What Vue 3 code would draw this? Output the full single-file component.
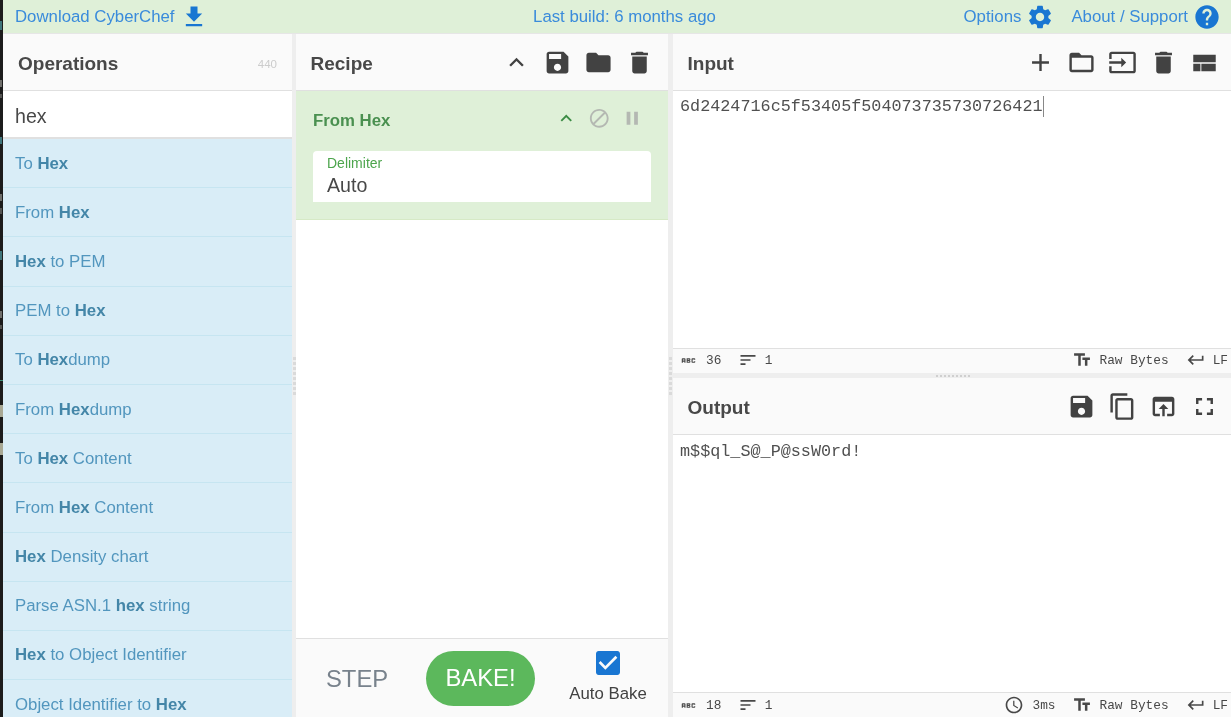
<script setup>
const P = {
  download: 'M19 9h-4V3H9v6H5l7 7 7-7zM5 18v2h14v-2H5z',
  settings: 'M19.14 12.94c.04-.3.06-.61.06-.94 0-.32-.02-.64-.07-.94l2.03-1.58c.18-.14.23-.41.12-.61l-1.92-3.32c-.12-.22-.37-.29-.59-.22l-2.39.96c-.5-.38-1.03-.7-1.62-.94l-.36-2.54c-.04-.24-.24-.41-.48-.41h-3.84c-.24 0-.43.17-.47.41l-.36 2.54c-.59.24-1.13.57-1.62.94l-2.39-.96c-.22-.08-.47 0-.59.22L2.74 8.87c-.12.21-.08.47.12.61l2.03 1.58c-.05.3-.09.63-.09.94s.02.64.07.94l-2.03 1.58c-.18.14-.23.41-.12.61l1.92 3.32c.12.22.37.29.59.22l2.39-.96c.5.38 1.03.7 1.62.94l.36 2.54c.05.24.24.41.48.41h3.84c.24 0 .44-.17.47-.41l.36-2.54c.59-.24 1.13-.56 1.62-.94l2.39.96c.22.08.47 0 .59-.22l1.92-3.32c.12-.22.07-.47-.12-.61l-2.01-1.58zM12 15.6c-1.98 0-3.6-1.62-3.6-3.6s1.62-3.6 3.6-3.6 3.6 1.62 3.6 3.6-1.62 3.6-3.6 3.6z',
  help: 'M12 2C6.48 2 2 6.48 2 12s4.48 10 10 10 10-4.48 10-10S17.52 2 12 2zm1 17h-2v-2h2v2zm2.07-7.75l-.9.92C13.45 12.9 13 13.5 13 15h-2v-.5c0-1.1.45-2.1 1.17-2.83l1.24-1.26c.37-.36.59-.86.59-1.41 0-1.1-.9-2-2-2s-2 .9-2 2H8c0-2.21 1.79-4 4-4s4 1.79 4 4c0 .88-.36 1.68-.93 2.25z',
  up: 'M7.41 15.41L12 10.83l4.59 4.58L18 14l-6-6-6 6z',
  save: 'M17 3H5c-1.11 0-2 .9-2 2v14c0 1.1.89 2 2 2h14c1.1 0 2-.9 2-2V7l-4-4zm-5 16c-1.66 0-3-1.34-3-3s1.34-3 3-3 3 1.34 3 3-1.34 3-3 3zm3-10H5V5h10v4z',
  folder: 'M10 4H4c-1.1 0-1.99.9-1.99 2L2 18c0 1.1.9 2 2 2h16c1.1 0 2-.9 2-2V8c0-1.1-.9-2-2-2h-8l-2-2z',
  trash: 'M6 19c0 1.1.9 2 2 2h8c1.1 0 2-.9 2-2V7H6v12zM19 4h-3.5l-1-1h-5l-1 1H5v2h14V4z',
  add: 'M19 13h-6v6h-2v-6H5v-2h6V5h2v6h6v2z',
  open: 'M20 6h-8l-2-2H4c-1.1 0-1.99.9-1.99 2L2 18c0 1.1.9 2 2 2h16c1.1 0 2-.9 2-2V8c0-1.1-.9-2-2-2zm0 12H4V8h16v10z',
  input: 'M21 3.01H3c-1.1 0-2 .9-2 2V9h2V4.99h18v14.03H3V15H1v4.01c0 1.1.9 1.98 2 1.98h18c1.1 0 2-.88 2-1.98v-14c0-1.11-.9-2-2-2zM11 16l4-4-4-4v3H1v2h10v3z',
  layout: 'M2.7 5.6h18.6v6.1H2.7zM2.7 13h5.9v6.2H2.7zM9.4 13h11.9v6.2H9.4z',
  copy: 'M16 1H4c-1.1 0-2 .9-2 2v14h2V3h12V1zm3 4H8c-1.1 0-2 .9-2 2v14c0 1.1.9 2 2 2h11c1.1 0 2-.9 2-2V7c0-1.1-.9-2-2-2zm0 16H8V7h11v14z',
  browser: 'M19 4H5c-1.11 0-2 .9-2 2v12c0 1.1.89 2 2 2h4v-2H5V8h14v10h-4v2h4c1.1 0 2-.9 2-2V6c0-1.1-.89-2-2-2zm-7 6l-4 4h3v6h2v-6h3l-4-4z',
  fullscreen: 'M7 14H5v5h5v-2H7v-3zm-2-4h2V7h3V5H5v5zm12 7h-3v2h5v-5h-2v3zM14 5v2h3v3h2V5h-5z',
  block: 'M12 2C6.48 2 2 6.48 2 12s4.48 10 10 10 10-4.48 10-10S17.52 2 12 2zM4 12c0-4.42 3.58-8 8-8 1.85 0 3.55.63 4.9 1.69L5.69 16.9C4.63 15.55 4 13.85 4 12zm8 8c-1.85 0-3.55-.63-4.9-1.69L18.31 7.1C19.37 8.45 20 10.15 20 12c0 4.42-3.58 8-8 8z',
  pause: 'M6 19h4V5H6v14zm8-14v14h4V5h-4z',
  check: 'M19 3H5c-1.11 0-2 .9-2 2v14c0 1.1.89 2 2 2h14c1.11 0 2-.9 2-2V5c0-1.1-.89-2-2-2zm-9 14l-5-5 1.41-1.41L10 14.17l7.59-7.59L19 8l-9 9z',
  text: 'M2.5 4v3h5v12h3V7h5V4h-13zm19 5h-9v3h3v7h3v-7h3V9z',
  ret: 'M19 7v4H5.83l3.58-3.59L8 6l-6 6 6 6 1.41-1.41L5.83 13H21V7z',
  sort: 'M3 18h6v-2H3v2zM3 6v2h18V6H3zm0 7h12v-2H3v2z',
  abc: 'M21 11h-1.5v-.5h-2v3h2V13H21v1c0 .55-.45 1-1 1h-3c-.55 0-1-.45-1-1v-4c0-.55.45-1 1-1h3c.55 0 1 .45 1 1v1zM8 10v5H6.5v-1.5h-2V15H3v-5c0-.55.45-1 1-1h3c.55 0 1 .45 1 1zm-1.5.5h-2V12h2v-1.5zm7 1.5c.55 0 1 .45 1 1v1c0 .55-.45 1-1 1h-4V9h4c.55 0 1 .45 1 1v1c0 .55-.45 1-1 1zM11 10.5v.75h2v-.75h-2zm2 2.25h-2v.75h2v-.75z',
  clock: 'M11.99 2C6.47 2 2 6.48 2 12s4.47 10 9.99 10C17.52 22 22 17.52 22 12S17.52 2 11.99 2zM12 20c-4.42 0-8-3.58-8-8s3.58-8 8-8 8 3.58 8 8-3.58 8-8 8zm.5-13H11v6l5.25 3.15.75-1.23-4.5-2.67z'
}
const ops = [
  [['To ', 0], ['Hex', 1]],
  [['From ', 0], ['Hex', 1]],
  [['Hex', 1], [' to PEM', 0]],
  [['PEM to ', 0], ['Hex', 1]],
  [['To ', 0], ['Hex', 1], ['dump', 0]],
  [['From ', 0], ['Hex', 1], ['dump', 0]],
  [['To ', 0], ['Hex', 1], [' Content', 0]],
  [['From ', 0], ['Hex', 1], [' Content', 0]],
  [['Hex', 1], [' Density chart', 0]],
  [['Parse ASN.1 ', 0], ['hex', 1], [' string', 0]],
  [['Hex', 1], [' to Object Identifier', 0]],
  [['Object Identifier to ', 0], ['Hex', 1]]
]
</script>

<template>
  <div class="page">
    <header class="banner">
      <div class="b-left">
        <a>Download CyberChef</a>
        <svg class="ic b-ic" viewBox="0 0 24 24"><path :d="P.download" /></svg>
      </div>
      <div class="b-mid">Last build: 6 months ago</div>
      <div class="b-right">
        <a>Options</a>
        <svg class="ic b-ic" viewBox="0 0 24 24"><path :d="P.settings" /></svg>
        <a class="about">About / Support</a>
        <svg class="ic b-ic" viewBox="0 0 24 24"><path :d="P.help" /></svg>
      </div>
    </header>
    <main class="workspace">
      <section class="col ops">
        <div class="title">
          <span class="name">Operations</span>
          <span class="count">440</span>
        </div>
        <div class="search">hex</div>
        <ul class="list">
          <li v-for="(op, i) in ops" :key="i">
            <template v-for="(t, j) in op" :key="j"><b v-if="t[1]">{{ t[0] }}</b><span v-else>{{ t[0] }}</span></template>
          </li>
        </ul>
      </section>
      <div class="gutter-v"><i class="dots-v"></i></div>
      <section class="col recipe">
        <div class="title">
          <span class="name">Recipe</span>
          <div class="tools">
            <svg class="ic t29" viewBox="0 0 24 24"><path :d="P.up" /></svg>
            <svg class="ic t29" viewBox="0 0 24 24"><path :d="P.save" /></svg>
            <svg class="ic t29" viewBox="0 0 24 24"><path :d="P.folder" /></svg>
            <svg class="ic t29" viewBox="0 0 24 24"><path :d="P.trash" /></svg>
          </div>
        </div>
        <div class="op">
          <div class="op-head">
            <span class="op-name">From Hex</span>
            <div class="op-tools">
              <svg class="ic green" viewBox="0 0 24 24"><path :d="P.up" /></svg>
              <svg class="ic grey" viewBox="0 0 24 24"><path :d="P.block" /></svg>
              <svg class="ic grey" viewBox="0 0 24 24"><path :d="P.pause" /></svg>
            </div>
          </div>
          <div class="field">
            <label>Delimiter</label>
            <div class="val">Auto</div>
          </div>
        </div>
        <div class="spacer"></div>
        <div class="controls">
          <span class="step">STEP</span>
          <span class="bake">BAKE!</span>
          <div class="auto">
            <svg class="check" viewBox="3 3 18 18"><path :d="P.check" /></svg>
            <span>Auto Bake</span>
          </div>
        </div>
      </section>
      <div class="gutter-v"><i class="dots-v"></i></div>
      <section class="col io">
        <div class="pane in">
          <div class="title">
            <span class="name">Input</span>
            <div class="tools">
              <svg class="ic t29" viewBox="0 0 24 24"><path :d="P.add" /></svg>
              <svg class="ic t29" viewBox="0 0 24 24"><path :d="P.open" /></svg>
              <svg class="ic t29" viewBox="0 0 24 24"><path :d="P.input" /></svg>
              <svg class="ic t29" viewBox="0 0 24 24"><path :d="P.trash" /></svg>
              <svg class="ic t29" viewBox="0 0 24 24"><path :d="P.layout" /></svg>
            </div>
          </div>
          <div class="body"><span class="caret">6d2424716c5f53405f504073735730726421</span></div>
          <div class="status">
            <svg class="ic s-abc" viewBox="2 6 20 12"><path :d="P.abc" /></svg>
            <span class="s-n">36</span>
            <svg class="ic s" viewBox="0 0 24 24"><path :d="P.sort" /></svg>
            <span>1</span>
            <div class="spacer"></div>
            <svg class="ic s s-t" viewBox="0 0 24 24"><path :d="P.text" /></svg>
            <span>Raw Bytes</span>
            <svg class="ic s s-r" viewBox="0 0 24 24"><path :d="P.ret" /></svg>
            <span>LF</span>
          </div>
        </div>
        <div class="gutter-h"><i class="dots-h"></i></div>
        <div class="pane out">
          <div class="title">
            <span class="name">Output</span>
            <div class="tools">
              <svg class="ic t29" viewBox="0 0 24 24"><path :d="P.save" /></svg>
              <svg class="ic t29" viewBox="0 0 24 24"><path :d="P.copy" /></svg>
              <svg class="ic t29" viewBox="0 0 24 24"><path :d="P.browser" /></svg>
              <svg class="ic t29" viewBox="0 0 24 24"><path :d="P.fullscreen" /></svg>
            </div>
          </div>
          <div class="body">m$$ql_S@_P@ssW0rd!</div>
          <div class="status">
            <svg class="ic s-abc" viewBox="2 6 20 12"><path :d="P.abc" /></svg>
            <span class="s-n">18</span>
            <svg class="ic s" viewBox="0 0 24 24"><path :d="P.sort" /></svg>
            <span>1</span>
            <div class="spacer"></div>
            <svg class="ic s s-c" viewBox="0 0 24 24"><path :d="P.clock" /></svg>
            <span>3ms</span>
            <svg class="ic s s-t s-t2" viewBox="0 0 24 24"><path :d="P.text" /></svg>
            <span>Raw Bytes</span>
            <svg class="ic s s-r" viewBox="0 0 24 24"><path :d="P.ret" /></svg>
            <span>LF</span>
          </div>
        </div>
      </section>
    </main>
  </div>
</template>

<style>
html, body { margin: 0; overflow: hidden; background: #1b1b1b; }
</style>

<style scoped>
.page {
  width: 1231px;
  height: 717px;
  padding-left: 3px;
  box-sizing: border-box;
  display: flex;
  flex-direction: column;
  overflow: hidden;
  filter: blur(0.4px);
  font-family: "Liberation Sans", Arial, sans-serif;
  color: #424242;
  background-color: #1c1c1c;
  background-repeat: no-repeat;
  background-image:
    linear-gradient(#3f757b, #3f757b), linear-gradient(#6f6f6c, #6f6f6c), linear-gradient(#555553, #555553),
    linear-gradient(#3f757b, #3f757b), linear-gradient(#6f6f6c, #6f6f6c), linear-gradient(#555553, #555553),
    linear-gradient(#3f757b, #3f757b), linear-gradient(#6f6f6c, #6f6f6c), linear-gradient(#555553, #555553),
    linear-gradient(#3f8f7a, #3f8f7a), linear-gradient(#a8a894, #a8a894), linear-gradient(#a8a894, #a8a894);
  background-size:
    2px 9px, 2px 7px, 2px 4px,
    2px 7px, 2px 7px, 2px 6px,
    2px 9px, 2px 7px, 2px 4px,
    3px 1px, 3px 12px, 3px 12px;
  background-position:
    0 21px, 0 80px, 0 94px,
    0 137px, 0 194px, 0 208px,
    0 251px, 0 311px, 0 325px,
    0 380px, 0 405px, 0 443px;
}
.ic { display: block; fill: currentColor; flex: none; }
.banner {
  height: 34px;
  flex: none;
  box-sizing: border-box;
  background: #dff0d8;
  border-bottom: 1px solid #e6e6e6;
  display: grid;
  grid-template-columns: 1fr auto 1fr;
  align-items: center;
  padding: 0 10px 0 12px;
  font-size: 16.8px;
  color: #3a8bdb;
}
.b-left, .b-right { display: flex; align-items: center; }
.b-right { justify-content: flex-end; }
.b-mid { margin-left: 13px; }
.b-ic { width: 28px; height: 28px; color: #1976d2; margin-left: 5px; }
.about { margin-left: 17px; }
.workspace {
  flex: 1;
  min-height: 0;
  display: grid;
  grid-template-columns: 289px 4px 372px 5px 558px;
  background: #eee;
}
.col { display: flex; flex-direction: column; min-height: 0; min-width: 0; background: #fff; overflow: hidden; }
.title {
  height: 57px;
  flex: none;
  box-sizing: border-box;
  background: #fafafa;
  border-bottom: 1px solid #e0e0e0;
  display: flex;
  align-items: center;
  justify-content: space-between;
  padding: 0 12.5px 0 14.5px;
  font-size: 19px;
  font-weight: 700;
  color: #484848;
}
.recipe .title { padding-right: 14px; }
.name { padding-top: 4px; }
.ops .title { padding: 0 15px; }
.count { font-size: 11.5px; font-weight: 400; color: #ccc; padding-top: 4px; }
.search {
  height: 48px;
  flex: none;
  box-sizing: border-box;
  border-bottom: 2px solid #e0e0e0;
  padding: 4px 12px 0;
  display: flex;
  align-items: center;
  font-size: 19.6px;
  color: #484848;
}
.list { list-style: none; margin: 0; padding: 0; background: #d9edf7; flex: 1; }
.list li {
  height: 49.2px;
  box-sizing: border-box;
  border-bottom: 1px solid #c6e5f1;
  display: flex;
  align-items: center;
  white-space: pre;
  padding: 1px 12px 0;
  font-size: 16.8px;
  color: #5296be;
}
.list b { color: #4486a8; }
.tools { display: flex; align-items: center; gap: 12px; color: #424242; }
.t29 { width: 29px; height: 29px; }
.op {
  height: 129px;
  flex: none;
  box-sizing: border-box;
  background: #dff0d8;
  padding: 0 17px;
  border-bottom: 1px solid #d6e9c6;
}
.op-head { height: 60px; display: flex; justify-content: space-between; align-items: center; }
.op-name { font-size: 16.8px; font-weight: 700; color: #4a9050; }
.op-tools { display: flex; align-items: center; gap: 10.5px; margin-right: 8px; margin-top: -6px; }
.op-tools svg { width: 22.5px; height: 22.5px; }
.green { color: #3c8c45; }
.grey { color: #b4b8b2; }
.field {
  height: 51px;
  box-sizing: border-box;
  background: #fff;
  border-radius: 4px 4px 0 0;
  padding: 3px 14px 0;
}
.field label { display: block; font-size: 14px; line-height: 18px; color: #4da54d; }
.val { font-size: 19.6px; line-height: 26px; color: #484848; }
.spacer { flex: 1; min-height: 0; }
.controls {
  height: 79px;
  flex: none;
  box-sizing: border-box;
  background: #fafafa;
  border-top: 1px solid #e0e0e0;
  display: flex;
  align-items: center;
  color: #424242;
  padding-left: 30px;
}
.step { font-size: 23.8px; color: #78828c; width: 100px; flex: none; padding-top: 1px; }
.bake {
  width: 109px;
  height: 55px;
  flex: none;
  border-radius: 28px;
  background: #5cb85c;
  color: #fff;
  font-size: 23.8px;
  display: flex;
  align-items: center;
  justify-content: center;
}
.auto {
  margin-left: 12px;
  width: 122px;
  flex: none;
  display: flex;
  flex-direction: column;
  align-items: center;
  gap: 9px;
  font-size: 16.8px;
  padding-bottom: 1px;
}
.check { width: 24px; height: 24px; fill: #1976d2; }
.io { background: #eee; }
.pane { display: flex; flex-direction: column; background: #fff; min-height: 0; }
.pane.in { height: 339px; flex: none; }
.pane.out { flex: 1; }
.body {
  flex: 1;
  min-height: 0;
  padding: 6px 7px;
  font-family: "Liberation Mono", monospace;
  font-size: 16.8px;
  line-height: 20px;
  color: #505050;
}
.out .body { padding-top: 7px; }
.caret { border-right: 1px solid #888; padding: 1px 0; }
.status {
  height: 25px;
  flex: none;
  box-sizing: border-box;
  background: #fafafa;
  border-top: 1px solid #e0e0e0;
  display: flex;
  align-items: center;
  padding: 0 3px 0 8px;
  font-family: "Liberation Mono", monospace;
  font-size: 12.8px;
  color: #484848;
}
.in .status { padding-bottom: 2px; }
.s { width: 20px; height: 20px; margin-left: 17px; margin-right: 6.5px; }
.s-abc { width: 15px; height: 9px; }
.s-n { margin-left: 10px; }
.s-t { margin-left: 0; margin-right: 8px; }
.s-t2 { margin-left: 16px; }
.s-r { margin-left: 17px; margin-right: 7px; }
.s-c { margin-left: 0; margin-right: 8px; }
.gutter-v { background: #eee; display: flex; align-items: center; justify-content: center; }
.dots-v {
  width: 3px;
  height: 38px;
  background: repeating-linear-gradient(to bottom, #dadada 0 3px, transparent 3px 5px);
}
.gutter-h { height: 5px; flex: none; background: #eee; display: flex; align-items: center; justify-content: center; }
.dots-h {
  width: 36px;
  height: 2px;
  margin-left: 4px;
  background: repeating-linear-gradient(to right, #cfcfcf 0 2px, transparent 2px 4px);
}
</style>
